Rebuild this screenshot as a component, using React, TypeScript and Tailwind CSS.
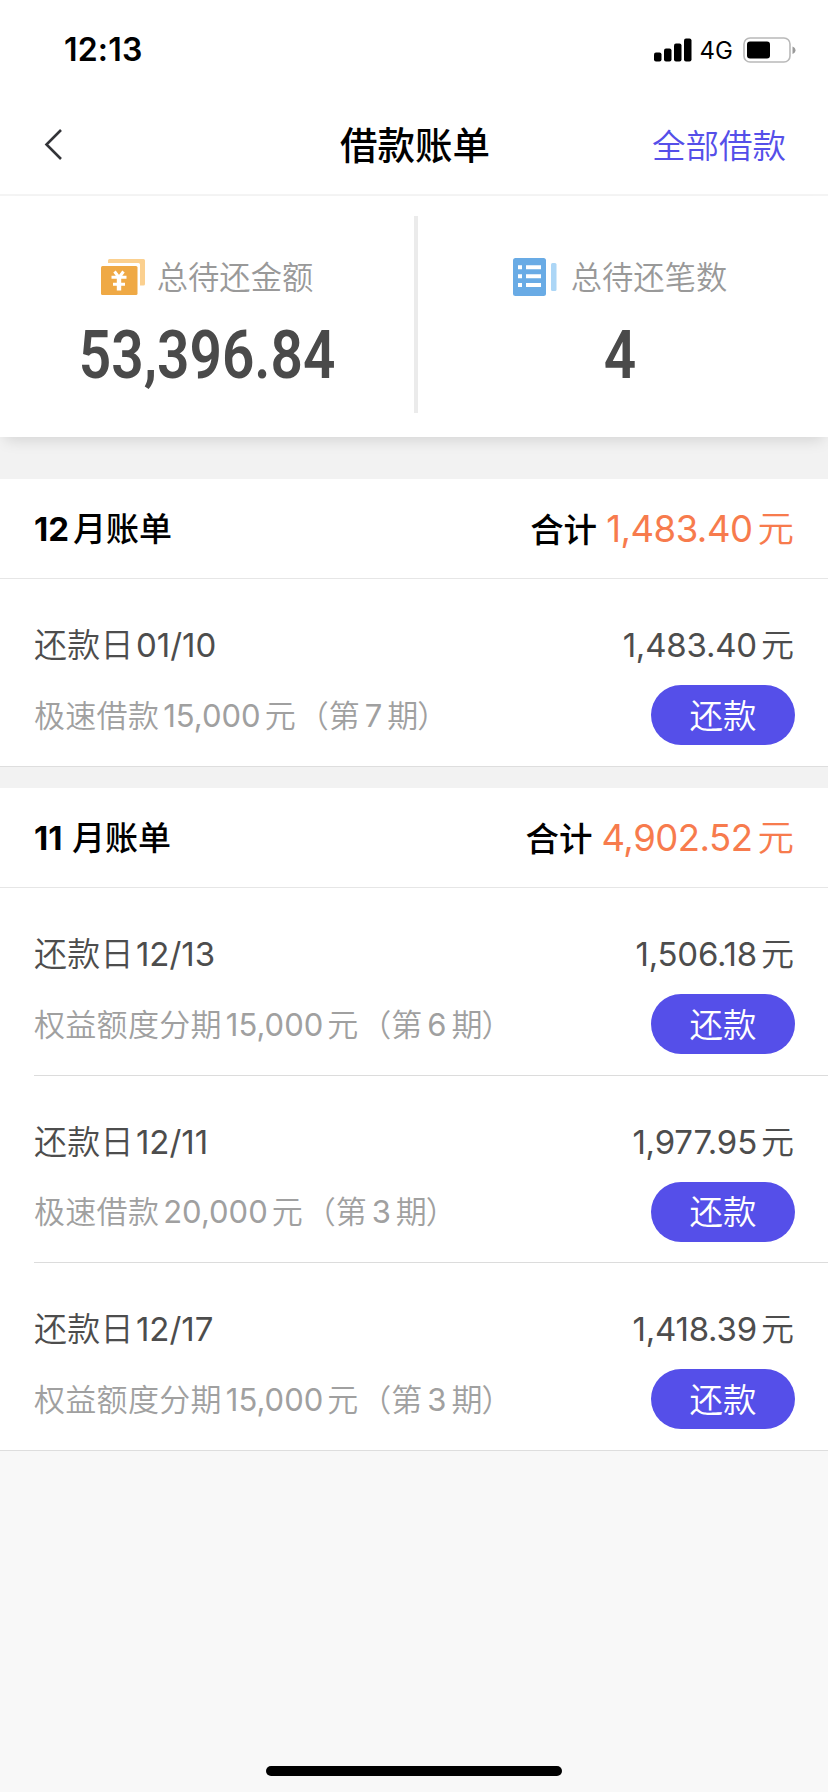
import React from 'react';
import clsx from 'clsx';

interface Bill {
  id: string;
  date: string;
  amount: string;
  product: string;
  principal: string;
  period: string;
}

interface MonthBill {
  month: string;
  total: string;
  bills: Bill[];
}

const months: MonthBill[] = [
  {
    month: '12',
    total: '1,483.40',
    bills: [
      { id: '1', date: '01/10', amount: '1,483.40', product: '极速借款', principal: '15,000', period: '7' },
    ],
  },
  {
    month: '11',
    total: '4,902.52',
    bills: [
      { id: '2', date: '12/13', amount: '1,506.18', product: '权益额度分期', principal: '15,000', period: '6' },
      { id: '3', date: '12/11', amount: '1,977.95', product: '极速借款', principal: '20,000', period: '3' },
      { id: '4', date: '12/17', amount: '1,418.39', product: '权益额度分期', principal: '15,000', period: '3' },
    ],
  },
];

function StatusBar() {
  return (
    <div className="flex h-24 items-center justify-between pt-1 pr-8 pl-16">
      <span className="text-[32px] font-semibold tracking-[0.2px]">12:13</span>
      <div className="flex items-center">
        <svg width="38" height="24" viewBox="0 0 38 24">
          <rect x="0" y="14.5" width="7.5" height="9" rx="2" />
          <rect x="10" y="10.5" width="7.5" height="13" rx="2" />
          <rect x="20" y="5.5" width="7.5" height="18" rx="2" />
          <rect x="30" y="0.5" width="7.5" height="23" rx="2" />
        </svg>
        <span className="ml-2 pt-0.5 text-[24px]">4G</span>
        <svg className="ml-2.5" width="53" height="26" viewBox="0 0 53 26">
          <rect x="1" y="1" width="46" height="24" rx="6" fill="none" stroke="#b9b9b9" strokeWidth="1.6" />
          <rect x="4" y="4.5" width="23" height="17" rx="3" />
          <path d="M49.5 9.5c4 1.500 4 6 0 7.500z" fill="#9a9a9a" />
        </svg>
      </div>
    </div>
  );
}

function AmountIcon() {
  return (
    <svg width="44" height="36" viewBox="0 0 44 36">
      <path d="M7 4V1.500Q7 0 8.500 0H42.500Q44 0 44 1.500V25Q44 26.500 42.500 26.500H39V5.500Q39 4 37.500 4z" fill="#fbd08f" />
      <rect x="0" y="7" width="36.5" height="29" rx="1.5" fill="#efa945" />
      <path d="M13.500 12.500l4.500 6 4.500-6M10.500 18.300h15M12 25.300h12M18 18v13" fill="none" stroke="#fff" strokeWidth="3" />
      <path d="M18 18v13.500" stroke="#fff" strokeWidth="4.400" />
    </svg>
  );
}

function CountIcon() {
  return (
    <svg width="46" height="38" viewBox="0 0 46 38">
      <rect width="33" height="38" rx="2.5" fill="#69abe5" />
      <path d="M5 9.300h4M5 18.200h4M5 27h4M13 9.300h15M13 18.200h15M13 27h15" stroke="#fff" strokeWidth="4" />
      <rect x="38" y="5" width="5.5" height="28" rx="1.5" fill="#acd6f6" />
    </svg>
  );
}

function SummaryItem({ icon, label, value }: { icon: React.ReactNode; label: string; value: string }) {
  return (
    <div className="flex h-[197px] flex-col items-center pt-10">
      <div className="flex h-[42px] items-center gap-3">
        {icon}
        <span className="pt-px text-[31.3px] leading-[42px] font-[350] text-[#999]">{label}</span>
      </div>
      <div className="mt-[27px] scale-x-[0.86] font-[Roboto] text-[66px] leading-[62px] font-semibold text-[#4a4a4a]">
        {value}
      </div>
    </div>
  );
}

function Summary() {
  return (
    <div className="relative flex h-[241px] bg-white pt-5 shadow-[0_8px_14px_-5px_rgba(0,0,0,0.13)]">
      <div className="w-[414px]">
        <SummaryItem icon={<AmountIcon />} label="总待还金额" value="53,396.84" />
      </div>
      <div className="h-[197px] w-1 bg-[#ebebeb]" />
      <div className="flex-1 pr-1.5">
        <SummaryItem icon={<CountIcon />} label="总待还笔数" value="4" />
      </div>
    </div>
  );
}

function BillRow({ bill, last }: { bill: Bill; last: boolean }) {
  return (
    <div className={clsx('pl-[34px]', last && 'border-b border-[#dedede]')}>
      <div className={clsx('pt-[42px] pr-[34px]', last ? 'h-[186.5px]' : 'h-[187.5px] border-b border-[#dcdcdc]')}>
        <div className="flex h-12 items-center justify-between pt-0.5 text-[33px] text-[#4d4d4d]">
          <div className="flex gap-0.5">
            <span className="font-[350] tracking-[0.3px]">还款日</span>
            <span className="font-[380]">{bill.date}</span>
          </div>
          <div className="flex gap-1">
            <span className="font-[380] tracking-[-0.2px]">{bill.amount}</span>
            <span className="font-[350]">元</span>
          </div>
        </div>
        <div className="mt-4 flex h-[60px] items-center justify-between">
          <div className="flex pt-0.5 text-[31px] font-[350] whitespace-nowrap text-[#a0a0a0]">
            <span className="tracking-[0.3px]">{bill.product}</span>
            <span className="ml-1 font-[380]">{bill.principal}</span>
            <span className="ml-1">元</span>
            <span className="ml-0.5">（第</span>
            <span className="ml-[5px] font-[380]">{bill.period}</span>
            <span className="ml-[5px] tracking-[-1px]">期）</span>
          </div>
          <button className="-mr-px h-[60px] w-[144px] rounded-full bg-[#554fe9] pt-0.5 text-[33.5px] font-[350] text-white">
            还款
          </button>
        </div>
      </div>
    </div>
  );
}

function MonthSection({ data }: { data: MonthBill }) {
  return (
    <section className="bg-white">
      <div className="flex h-[100px] items-center justify-between border-b border-[#e6e6e6] px-[34px] pt-0.5">
        <h2 className="flex gap-1 text-[33px]">
          <span className="min-w-[34px] font-bold">{data.month}</span>
          <span className="font-medium">月账单</span>
        </h2>
        <div className="flex items-center">
          <span className="pt-0.5 text-[33.5px] font-medium">合计</span>
          <div className="ml-[9px] flex gap-[5px] text-[36.5px] text-[#f77b4d]">
            <span className="font-[380] tracking-[-0.5px]">{data.total}</span>
            <span className="font-[350]">元</span>
          </div>
        </div>
      </div>
      {data.bills.map((bill, i) => (
        <BillRow key={bill.id} bill={bill} last={i === data.bills.length - 1} />
      ))}
    </section>
  );
}

function App() {
  return (
    <div className="flex h-[1792px] w-[828px] flex-col bg-[#f8f8f8] font-[Inter,'Noto_Sans_CJK_SC',sans-serif] text-black">
      <div className="bg-white">
        <StatusBar />
        <header className="flex h-[100px] items-center border-b-2 border-[#f4f4f4] pr-[42px] pl-11">
          <div className="flex-1">
            <svg width="20" height="32" viewBox="0 0 20 32">
              <path d="M17 1L2.500 15.500 17 30" fill="none" stroke="#333438" strokeWidth="2.6" />
            </svg>
          </div>
          <h1 className="pt-0.5 text-[37.5px] font-medium">借款账单</h1>
          <div className="flex-1 pt-0.5 text-right text-[33.5px] font-[350] text-[#554fe9]">全部借款</div>
        </header>
      </div>
      <div className="bg-[#f2f2f2]">
        <Summary />
        <div className="mt-[42px] flex flex-col gap-[21.5px]">
          {months.map((data) => (
            <MonthSection key={data.month} data={data} />
          ))}
        </div>
      </div>
      <div className="mt-auto mb-4 h-2.5 w-[296px] self-center rounded-full bg-black" />
    </div>
  );
}

export default App;
